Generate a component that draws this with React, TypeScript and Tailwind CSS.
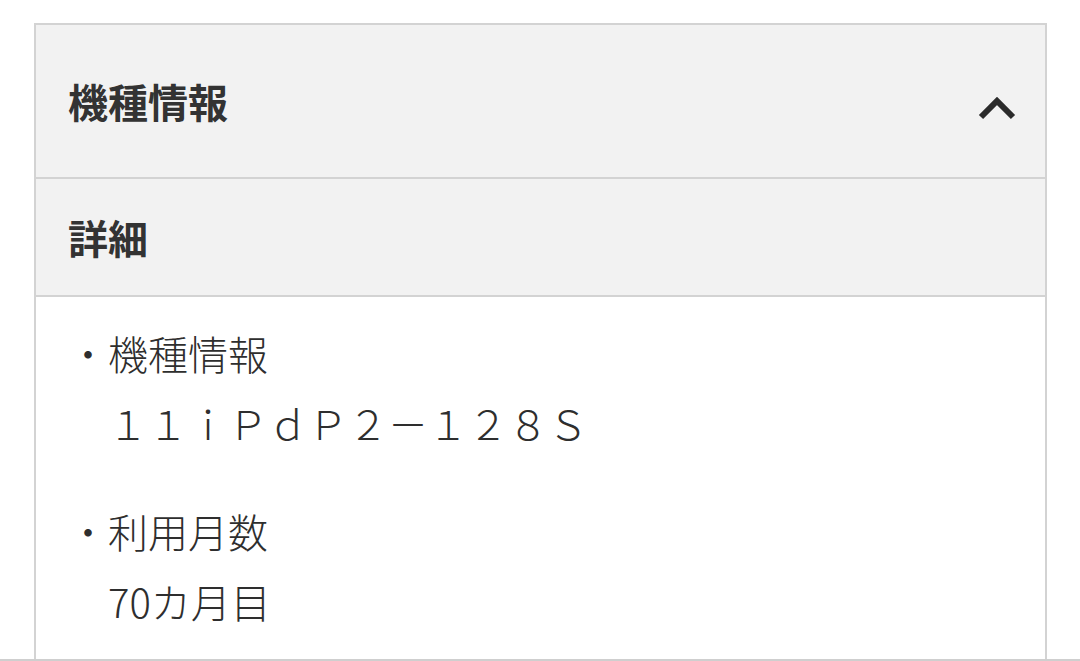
const jp = { fontFamily: '"Noto Sans CJK JP", "Noto Sans", sans-serif' };

function ChevronUp() {
    return (
        <svg width="40" height="40" viewBox="0 0 40 40" fill="none" aria-hidden="true">
            <polyline points="4,36 20,20 36,36" stroke="#2b2b2b" strokeWidth="6" strokeLinejoin="miter" />
        </svg>
    );
}

function Item({ label, value }: { label: string; value: string }) {
    return (
        <div className="text-[40px] font-light leading-[70px] text-[#2e2e2e] whitespace-pre">
            <p>・{label}</p>
            <p>{value}</p>
        </div>
    );
}

export default function App() {
    return (
        <div className="h-[661px] overflow-hidden bg-white border-b-2 border-[#cfcfcf]" style={jp}>
            <section className="mt-[23px] ml-[34px] mr-[33px] border-2 border-[#d3d3d3]">
                <button className="flex w-full h-[154px] items-center justify-between pl-8 pr-[28px] bg-[#f2f2f2] border-b-2 border-[#d3d3d3]">
                    <h2 className="text-[40px] font-bold text-[#333] leading-none">機種情報</h2>
                    <ChevronUp />
                </button>

                <div className="flex h-[118px] items-center pl-8 bg-[#f2f2f2] border-b-2 border-[#d3d3d3]">
                    <h3 className="text-[40px] font-bold text-[#333] leading-none">詳細</h3>
                </div>

                <div className="flex flex-col gap-[38px] pl-8 pt-[21px] pb-10">
                    <Item label="機種情報" value="　１１ｉＰｄＰ２－１２８Ｓ" />
                    <Item label="利用月数" value="　70カ月目" />
                </div>
            </section>
        </div>
    );
}
